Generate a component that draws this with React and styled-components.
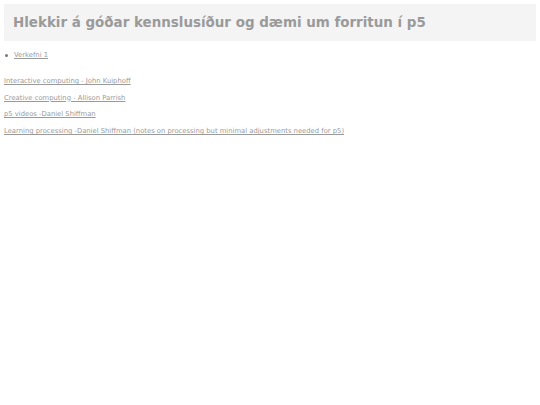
import React from 'react';
import styled, { createGlobalStyle } from 'styled-components';

const GlobalStyle = createGlobalStyle`
  body {
    margin: 4px;
    background: #ffffff;
    font-family: "DejaVu Sans", Verdana, sans-serif;
    color: #999999;
  }
`;

const Header = styled.header`
  background: #f4f4f4;
  height: 37px;
  display: flex;
  align-items: center;
  padding: 0 9px;
`;

const Title = styled.h1`
  margin: 0;
  font-size: 13.45px;
  font-weight: 700;
  color: #9a9a9a;
`;

const List = styled.ul`
  margin: 10px 0 0;
  padding: 0;
  list-style: none;
`;

const Item = styled.li`
  display: flex;
  align-items: center;
  gap: 6px;
  padding-left: 1px;
  &::before {
    content: '';
    width: 3px;
    height: 3px;
    border-radius: 50%;
    background: #777;
  }
`;

const Link = styled.a`
  color: #9a9a9a;
  text-decoration: underline;
  font-size: 6.8px;
`;

const Para = styled.p`
  margin: 0;
  height: 16.7px;
  line-height: 10px;
`;

const Links = styled.div`
  margin-top: 14px;
`;

const resources = [
  'Interactive computing - John Kuiphoff',
  'Creative computing - Allison Parrish',
  'p5 videos -Daniel Shiffman',
  'Learning processing -Daniel Shiffman (notes on processing but minimal adjustments needed for p5)',
];

export default function App() {
  return (
    <>
      <GlobalStyle />
      <Header>
        <Title>Hlekkir á góðar kennslusíður og dæmi um forritun í p5</Title>
      </Header>
      <List>
        <Item><Link href="#">Verkefni 1</Link></Item>
      </List>
      <Links>
        {resources.map((r) => (
          <Para key={r}><Link href="#">{r}</Link></Para>
        ))}
      </Links>
    </>
  );
}
